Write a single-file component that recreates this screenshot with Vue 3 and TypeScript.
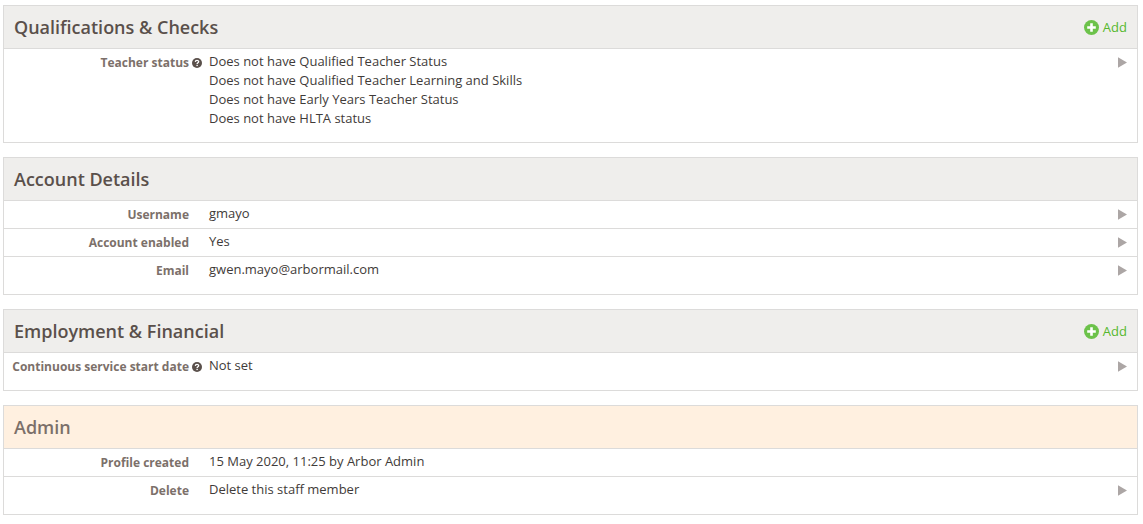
<script setup lang="ts">
interface Row {
  label: string
  values: string[]
  help?: boolean
  action?: boolean
}

interface Section {
  title: string
  rows: Row[]
  add?: boolean
  admin?: boolean
}

const sections: Section[] = [
  {
    title: 'Qualifications & Checks',
    add: true,
    rows: [
      {
        label: 'Teacher status',
        help: true,
        action: true,
        values: [
          'Does not have Qualified Teacher Status',
          'Does not have Qualified Teacher Learning and Skills',
          'Does not have Early Years Teacher Status',
          'Does not have HLTA status',
        ],
      },
    ],
  },
  {
    title: 'Account Details',
    rows: [
      { label: 'Username', values: ['gmayo'], action: true },
      { label: 'Account enabled', values: ['Yes'], action: true },
      { label: 'Email', values: ['gwen.mayo@arbormail.com'], action: true },
    ],
  },
  {
    title: 'Employment & Financial',
    add: true,
    rows: [
      { label: 'Continuous service start date', values: ['Not set'], help: true, action: true },
    ],
  },
  {
    title: 'Admin',
    admin: true,
    rows: [
      { label: 'Profile created', values: ['15 May 2020, 11:25 by Arbor Admin'] },
      { label: 'Delete', values: ['Delete this staff member'], action: true },
    ],
  },
]
</script>

<template>
  <main class="profile">
    <section
      v-for="section in sections"
      :key="section.title"
      class="panel"
      :class="{ 'panel--admin': section.admin }"
    >
      <header class="panel-header">
        <h2 class="panel-title">{{ section.title }}</h2>
        <button v-if="section.add" type="button" class="add">
          <svg class="add-icon" viewBox="0 0 15 15" aria-hidden="true">
            <circle cx="7.5" cy="7.5" r="7.5" fill="#6cc24a" />
            <path d="M7.5 3.2v8.6M3.2 7.5h8.6" stroke="#fff" stroke-width="2.6" />
          </svg>
          <span>Add</span>
        </button>
      </header>
      <dl class="rows">
        <div v-for="row in section.rows" :key="row.label" class="row">
          <dt class="label">
            <span class="label-text">{{ row.label }}</span>
            <span class="help-slot">
              <button v-if="row.help" type="button" class="help" :aria-label="`Help: ${row.label}`">
                <svg class="help-icon" viewBox="0 0 10 10" aria-hidden="true">
                  <circle cx="5" cy="5" r="5" fill="#5a504b" />
                  <path
                    d="M3.3 3.9C3.4 2.8 4.1 2.3 5 2.3s1.7.5 1.7 1.4C6.7 4.7 5.1 4.8 5.1 6"
                    fill="none"
                    stroke="#fff"
                    stroke-width="1.3"
                  />
                  <rect x="4.4" y="6.8" width="1.4" height="1.3" fill="#fff" />
                </svg>
              </button>
            </span>
          </dt>
          <dd class="value">
            <span v-for="value in row.values" :key="value" class="line">{{ value }}</span>
          </dd>
          <dd v-if="row.action" class="action">
            <button type="button" class="open" :aria-label="`Open ${row.label}`">
              <svg class="open-icon" viewBox="0 0 9 11" aria-hidden="true">
                <path d="M0 0.3L9 5.5L0 10.7Z" fill="#aca6a5" />
              </svg>
            </button>
          </dd>
        </div>
      </dl>
    </section>
  </main>
</template>

<style>
body {
  margin: 0;
  background: #fff;
}
</style>

<style scoped>
.profile {
  display: flex;
  flex-direction: column;
  gap: 14px;
  padding: 5px 5px 9px 3px;
  font-family: "Open Sans", "Noto Sans", sans-serif;
  font-size: 13px;
  line-height: 19px;
  color: #3f3b39;
}

.panel {
  border: 1px solid #dcdbda;
}

.panel-header {
  display: flex;
  align-items: center;
  justify-content: space-between;
  height: 42px;
  padding: 0 10px;
  background: #efeeec;
  border-bottom: 1px solid #dcdbda;
}

.panel--admin .panel-header {
  background: #fff0e0;
}

.panel-title {
  margin: 0;
  font-size: 18px;
  line-height: 24px;
  font-weight: 600;
  color: #5a504b;
}

.panel--admin .panel-title {
  color: #7c706a;
}

button {
  margin: 0;
  padding: 0;
  border: 0;
  background: none;
  font: inherit;
  cursor: pointer;
}

.add {
  display: flex;
  align-items: center;
  gap: 4px;
  color: #56b82c;
}

.add-icon {
  display: block;
  width: 15px;
  height: 15px;
}

.rows {
  margin: 0;
  padding-bottom: 10px;
}

.row {
  display: flex;
  align-items: flex-start;
  padding: 3px 10px 4px 0;
}

.row + .row {
  border-top: 1px solid #dcdbda;
}

.label {
  display: flex;
  flex: none;
  width: 205px;
  padding-top: 1px;
  font-size: 12px;
  font-weight: 700;
  color: #7c706a;
}

.label-text {
  flex: 1;
  text-align: right;
  white-space: nowrap;
}

.help-slot {
  display: flex;
  align-items: center;
  width: 17px;
  height: 19px;
  padding-left: 3px;
}

.help-icon,
.open-icon {
  display: block;
}

.help-icon {
  width: 10px;
  height: 10px;
}

.value {
  flex: 1;
  min-width: 0;
  margin: 0;
}

.line {
  display: block;
}

.action {
  display: flex;
  align-items: center;
  height: 20px;
  margin: 0;
}

.open-icon {
  width: 9px;
  height: 11px;
}
</style>
